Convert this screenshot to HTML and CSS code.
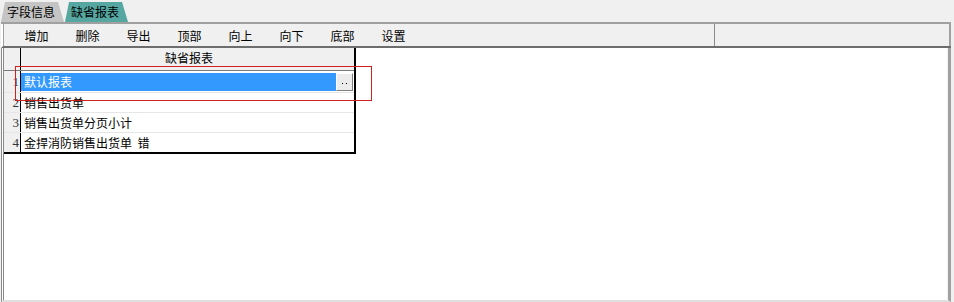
FILE: index.html
```html
<!DOCTYPE html>
<html>
<head>
<meta name="viewport" content="width=device-width, initial-scale=1">
<link rel="stylesheet" href="styles.css">
</head>
<body>

<div class="tabs">
  <div class="tab">字段信息</div>
  <div class="tab active">缺省报表</div>
</div>

<div class="panel">
  <div class="toolbar">
    <div class="tools">
      <span class="tool">增加</span>
      <span class="tool">删除</span>
      <span class="tool">导出</span>
      <span class="tool">顶部</span>
      <span class="tool">向上</span>
      <span class="tool">向下</span>
      <span class="tool">底部</span>
      <span class="tool">设置</span>
    </div>
    <div class="tools-rest"></div>
  </div>

  <div class="sheet">
    <table class="grid">
      <tr class="head">
        <th class="num"></th>
        <th class="name">缺省报表</th>
      </tr>
      <tr class="edit">
        <td class="num">1</td>
        <td class="name">
          <div class="editor">
            <span class="value">默认报表</span>
            <span class="dots"><i></i><i></i></span>
          </div>
        </td>
      </tr>
      <tr>
        <td class="num">2</td>
        <td class="name">销售出货单</td>
      </tr>
      <tr>
        <td class="num">3</td>
        <td class="name">销售出货单分页小计</td>
      </tr>
      <tr class="last">
        <td class="num">4</td>
        <td class="name">金捍消防销售出货单&nbsp;&nbsp;错</td>
      </tr>
    </table>
    <!-- highlight box drawn over the grid -->
    <div class="mark"></div>
  </div>
</div>

</body>
</html>
```

FILE: styles.css
```css
body {
  margin: 0;
  background-color: #f0f0f0;
  font-family: "Noto Sans CJK SC", "DejaVu Sans", sans-serif;
  font-size: 12px;
  color: #000;
  width: 954px;
  height: 302px;
  overflow: hidden;
}

/* Tab strip */
.tabs {
  display: flex;
  height: 22px;
  padding-left: 1px;
  align-items: flex-end;
}

.tab {
  height: 20px;
  line-height: 20px;
  padding: 0 9px 0 6px;
  background-color: #c4c4c4;
  clip-path: polygon(4px 0, calc(100% - 6px) 0, 100% 100%, 0 100%);
  margin-right: 1px;
}

.tab.active {
  background-color: #56a7a1;
}

/* Outer panel */
.panel {
  margin-left: 1px;
  width: 950px;
  border-top: 2px solid #a0a0a0;
}

.toolbar {
  display: flex;
  height: 22px;
  border-left: 2px solid #fff;
  border-bottom: 2px solid #6d6d6d;
}

.tools {
  display: flex;
  width: 703px;
  padding-left: 7px;
  align-items: center;
  border-right: 1px solid #8a8a8a;
  border-left: 1px solid #a0a0a0;
}

.tool {
  width: 51px;
  text-align: center;
  margin-top: 1px;
}

.tools-rest {
  flex: 1;
  border-right: 2px solid #a0a0a0;
}

/* White sheet area */
.sheet {
  position: relative;
  height: 252px;
  background-color: #fff;
  border-left: 3px double #8a8a8a;
  border-right: 3px solid #a0a0a0;
  border-bottom: 2px solid #e0e0e0;
  box-shadow: inset -1px 0 0 #f4f4f4;
}

.grid {
  border-collapse: collapse;
  border-right: 2px solid #000;
  border-bottom: 2px solid #000;
}

.grid td, .grid th {
  padding: 0;
  height: 19px;
  line-height: 19px;
  font-weight: normal;
  border-bottom: 1px solid #e6e6e6;
}

.grid .num {
  width: 15px;
  background-color: #f0f0f0;
  border-right: 1px solid #000;
  text-align: right;
  padding-right: 1px;
  font-family: "Liberation Serif", serif;
  font-size: 13px;
  color: #333;
}

.grid .name {
  width: 330px;
  padding-left: 3px;
}

.grid .head th {
  height: 22px;
  line-height: 20px;
  vertical-align: top;
  background-color: #f0f0f0;
  border-bottom: 1px solid #7a7a7a;
  text-align: center;
}

.grid .head .num {
  border-right: 1px solid #000;
}

.grid .edit .name {
  padding: 1px 1px 1px 0;
}

.editor {
  display: flex;
  height: 18px;
}

.value {
  flex: 1;
  background-color: #3399ff;
  color: #fff;
  line-height: 18px;
  padding-left: 3px;
}

/* the "..." button of the cell editor */
.dots {
  width: 15px;
  display: flex;
  justify-content: center;
  align-items: center;
  gap: 3px;
  background-color: #ececec;
  border: 1px solid #fff;
  border-right-color: #808080;
  border-bottom-color: #808080;
}

.dots i {
  width: 1px;
  height: 1px;
  margin-top: 3px;
  background-color: #000;
}

.mark {
  position: absolute;
  left: 11px;
  top: 18px;
  width: 355px;
  height: 33px;
  border: 1px solid #d02020;
}
```
